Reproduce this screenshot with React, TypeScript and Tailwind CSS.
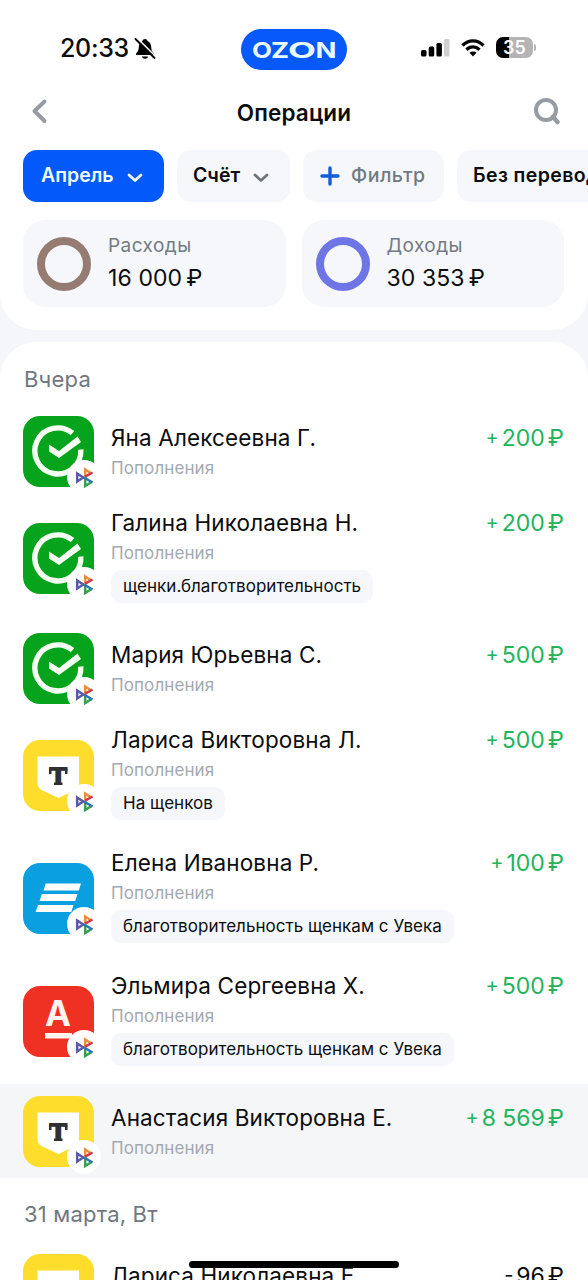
import { ReactNode } from 'react';

type Bank = 'sber' | 'tbank' | 'vtb' | 'alfa';

type Operation = {
  id: number;
  name: string;
  bank: Bank;
  sign: string;
  amount: string;
  note?: string;
  active?: boolean;
};

const yesterday: Operation[] = [
  { id: 1, name: 'Яна Алексеевна Г.', bank: 'sber', sign: '+', amount: '200' },
  {
    id: 2,
    name: 'Галина Николаевна Н.',
    bank: 'sber',
    sign: '+',
    amount: '200',
    note: 'щенки.благотворительность',
  },
  { id: 3, name: 'Мария Юрьевна С.', bank: 'sber', sign: '+', amount: '500' },
  {
    id: 4,
    name: 'Лариса Викторовна Л.',
    bank: 'tbank',
    sign: '+',
    amount: '500',
    note: 'На щенков',
  },
  {
    id: 5,
    name: 'Елена Ивановна Р.',
    bank: 'vtb',
    sign: '+',
    amount: '100',
    note: 'благотворительность щенкам с Увека',
  },
  {
    id: 6,
    name: 'Эльмира Сергеевна Х.',
    bank: 'alfa',
    sign: '+',
    amount: '500',
    note: 'благотворительность щенкам с Увека',
  },
  {
    id: 7,
    name: 'Анастасия Викторовна Е.',
    bank: 'tbank',
    sign: '+',
    amount: '8 569',
    active: true,
  },
];

const march: Operation[] = [
  { id: 8, name: 'Лариса Николаевна Е.', bank: 'tbank', sign: '-', amount: '96' },
];

const bankLogos: Record<Bank, ReactNode> = {
  sber: (
    <>
      <rect width="71" height="71" rx="17" fill="#06a31c" />
      <path
        d="M49.5 17.2A23 23 0 1 0 57.8 33.5"
        fill="none"
        stroke="#f4fff2"
        strokeWidth="5.4"
      />
      <path
        d="M26 28.5L36 35L54.5 20.5L58 26L36 42L26 35.5Z"
        fill="#f4fff2"
      />
    </>
  ),
  tbank: (
    <>
      <rect width="71" height="71" rx="17" fill="#ffdd2d" />
      <path
        d="M14.5 16.5H56V42C56 47 54 49 51 50.5L35.5 58L19.5 50.5C16.5 49 14.5 47 14.5 42Z"
        fill="#fff"
      />
      <text
        x="35.3"
        y="45"
        textAnchor="middle"
        textLength="20"
        lengthAdjust="spacingAndGlyphs"
        className="font-['Inter',sans-serif] text-[24px] font-black"
        fill="#2f3034"
      >
        T
      </text>
      <path d="M26 29H28.5V34H26ZM42 29H44.5V34H42ZM31 42.5H39.5V45H31Z" fill="#2f3034" />
    </>
  ),
  vtb: (
    <>
      <rect width="71" height="71" rx="17" fill="#0a9fdf" />
      <path
        d="M22.7 20.5H58L55.8 27.5H20.5ZM18.8 31H54.5L52.2 38H16.6ZM15 42H50.5L48.3 49H12.6Z"
        fill="#fff"
      />
    </>
  ),
  alfa: (
    <>
      <rect width="71" height="71" rx="17" fill="#ef3124" />
      <text
        x="35"
        y="40"
        textAnchor="middle"
        textLength="26"
        lengthAdjust="spacingAndGlyphs"
        className="font-['Inter',sans-serif] text-[35px] font-bold"
        fill="#fff4ee"
      >
        А
      </text>
      <rect x="22" y="47" width="27" height="5.5" fill="#fff4ee" />
    </>
  ),
};

const BankIcon = ({ bank }: { bank: Bank }) => (
  <svg width="78" height="78" viewBox="0 0 78 78" className="block shrink-0">
    {bankLogos[bank]}
    <circle cx="61" cy="61" r="17" fill="#fff" />
    <g fill="none" strokeWidth="2.5">
      <path d="M54.2 57.5V65.5L60.3 61.5Z" stroke="#5a5aa6" />
      <path d="M62.2 61.5V53.5L68 57.2" stroke="#e8903c" />
      <path d="M62.2 60.7L69.5 56.5" stroke="#d23a4c" />
      <path d="M62.2 62V70L68.2 66.2" stroke="#3a9d50" />
      <path d="M61 61.5L69.5 66.5" stroke="#2b74b8" />
    </g>
  </svg>
);

const ChevronDown = () => (
  <svg width="16" height="10" viewBox="0 0 16 10" fill="none" className="mt-[3px]">
    <path
      d="M2 2L8 7.5L14 2"
      stroke="currentColor"
      strokeWidth="2.8"
      strokeLinecap="round"
      strokeLinejoin="round"
    />
  </svg>
);

const StatusBar = () => (
  <div className="flex h-[76px] items-end justify-between pr-[51px] pb-[6px] pl-[60px]">
    <div className="flex h-[42px] w-[181px] items-center">
      <span className="w-[70px] text-[25px] font-medium tracking-[-0.3px] whitespace-nowrap">
        20:33
      </span>
      <svg width="22" height="22" viewBox="0 0 22 22" className="ml-[4px]">
        <path
          d="M11 1C12.5 1 13.3 1.8 13.5 3C16 4 17 6 17.2 9C17.4 13 18.5 14 20 15.5V17H2V15.5C3.5 14 4.6 13 4.8 9C5 6 6 4 8.5 3C8.7 1.8 9.5 1 11 1Z"
          fill="#000"
        />
        <path d="M8 18.5H14C13.5 21.5 8.5 21.5 8 18.5Z" fill="#000" />
        <path d="M3 0L22 19" stroke="#fff" strokeWidth="1.6" />
        <path d="M1.5 1L20.5 20" stroke="#000" strokeWidth="1.8" strokeLinecap="round" />
      </svg>
    </div>
    <div className="flex h-[41px] w-[106px] items-center justify-center rounded-full bg-[#0759fb]">
      <svg
        width="90"
        height="36"
        viewBox="0 0 90 36"
        fill="#e9fbff"
        className="font-['Inter',sans-serif] text-[22px] font-bold"
      >
        <text x="3" y="26" textLength="20" lengthAdjust="spacingAndGlyphs">O</text>
        <text x="22" y="26" textLength="18" lengthAdjust="spacingAndGlyphs">Z</text>
        <text x="39" y="26" textLength="28" lengthAdjust="spacingAndGlyphs">O</text>
        <text x="66.5" y="26" textLength="21" lengthAdjust="spacingAndGlyphs">N</text>
      </svg>
    </div>
    <div className="flex h-[42px] w-[190px] items-center justify-end gap-[11px] pr-px pb-[3px]">
      <svg width="29" height="19" viewBox="0 0 29 19">
        <rect x="0" y="12" width="5.5" height="6.5" rx="1.5" fill="#000" />
        <rect x="7.7" y="8.5" width="5.5" height="10" rx="1.5" fill="#000" />
        <rect x="15.4" y="5" width="5.5" height="13.5" rx="1.5" fill="#000" />
        <rect x="23" y="1" width="5.5" height="17.5" rx="1.5" fill="#cfcfcf" />
      </svg>
      <svg width="24" height="19" viewBox="0 0 24 19" fill="none" stroke="#000" strokeWidth="3.3">
        <path d="M1.5 7.5C7.5 1.3 16.5 1.3 22.5 7.5" />
        <path d="M5.5 11.7C9.3 8 14.7 8 18.5 11.7" />
        <path d="M12 18.5L8.5 14.8C10.5 13 13.5 13 15.5 14.8Z" fill="#000" stroke="none" />
      </svg>
      <div className="flex items-center">
        <div className="flex h-[21px] w-[37px] items-center justify-center rounded-[7px] bg-linear-to-r from-black from-35% to-[#b4b4b4] to-35% text-[18px] leading-[21px] font-semibold text-white">
          35
        </div>
        <div className="ml-px h-[7px] w-[2px] rounded-r-full bg-[#b4b4b4]" />
      </div>
    </div>
  </div>
);

const TitleBar = () => (
  <div className="flex h-[74px] items-center justify-between pr-[27px] pl-[29px]">
    <svg width="26" height="26" viewBox="0 0 26 26" fill="none" className="mb-1">
      <path
        d="M15.5 3.5L5.5 13L15.5 23"
        stroke="#969ca1"
        strokeWidth="4"
        strokeLinecap="round"
        strokeLinejoin="round"
      />
    </svg>
    <h1 className="text-[22.5px] font-semibold tracking-[0.15px]">Операции</h1>
    <svg width="28" height="28" viewBox="0 0 28 28" fill="none" className="mb-1">
      <circle cx="13" cy="13" r="10" stroke="#969ca1" strokeWidth="4" />
      <path d="M20 20L24.5 25" stroke="#969ca1" strokeWidth="4.5" strokeLinecap="round" />
    </svg>
  </div>
);

const Filters = () => (
  <div className="flex gap-[13px] overflow-hidden pl-[23px] text-[19.5px] font-semibold whitespace-nowrap">
    <div className="flex h-[52px] w-[141px] shrink-0 items-center justify-between rounded-[14px] bg-[#0459fb] pr-[21px] pl-[18px] text-[#effaff]">
      Апрель
      <ChevronDown />
    </div>
    <div className="flex h-[52px] w-[113px] shrink-0 items-center justify-between rounded-[14px] bg-[#f5f7fa] pr-[21px] pl-4">
      Счёт
      <span className="text-[#6e7479]">
        <ChevronDown />
      </span>
    </div>
    <div className="flex h-[52px] w-[141px] shrink-0 items-center gap-[11px] rounded-[14px] bg-[#f5f7fa] pl-[17px] font-medium tracking-[0.5px] text-[#6f7b84]">
      <svg width="20" height="20" viewBox="0 0 20 20">
        <path d="M10 2V18M2 10H18" stroke="#0f5fdc" strokeWidth="3.4" strokeLinecap="round" />
      </svg>
      Фильтр
    </div>
    <div className="flex h-[52px] w-[190px] shrink-0 items-center rounded-[14px] bg-[#f5f7fa] pl-4 tracking-[0.4px]">
      Без переводов
    </div>
  </div>
);

const Summary = ({
  title,
  amount,
  children,
}: {
  title: string;
  amount: string;
  children: ReactNode;
}) => (
  <div className="flex h-[87px] flex-1 items-center gap-[17px] rounded-[22px] bg-[#f5f7fa] pl-[14px]">
    {children}
    <div className="flex flex-col pb-[4px]">
      <span className="text-[19px] leading-[33px] tracking-[0.45px] text-[#727b83]">{title}</span>
      <span className="text-[23px] leading-[33px] tracking-[0.1px]">
        {amount}
        <span className="ml-[4px]">₽</span>
      </span>
    </div>
  </div>
);

const OperationRow = ({ item }: { item: Operation }) => (
  <li
    className={`flex px-6 ${item.note ? 'h-[123px]' : 'h-[94px]'} ${item.active ? 'bg-[#f4f6f8]' : ''}`}
  >
    <div className={`-ml-px ${item.note ? 'pt-[25px]' : 'pt-3'}`}>
      <BankIcon bank={item.bank} />
    </div>
    <div
      className={`ml-[10px] flex flex-1 flex-col items-start whitespace-nowrap ${item.note ? 'pt-[10px]' : 'pt-[19px]'}`}
    >
      <span className="text-[22.5px] leading-[30px] tracking-[0.13px]">{item.name}</span>
      <span className="text-[17px] leading-[30px] tracking-[0.1px] text-[#a3a9b0]">
        Пополнения
      </span>
      {item.note && (
        <span className="mt-0.5 rounded-[10px] bg-[#f5f7fa] px-3 text-[17px] leading-[33px] tracking-[0.03px]">
          {item.note}
        </span>
      )}
    </div>
    <div
      className={`flex text-[23px] leading-[30px] whitespace-pre ${item.note ? 'pt-[10px]' : 'pt-[19px]'} ${item.sign === '+' ? 'text-[#22b45b]' : ''}`}
    >
      <span className="mr-[3px] text-[20px] leading-[28px]">{item.sign}</span>
      {item.amount}
      <span className="ml-[3px]">₽</span>
    </div>
  </li>
);

const DayTitle = ({ children }: { children: ReactNode }) => (
  <h2 className="pl-6 text-[22px] leading-[30px] tracking-[0.2px] text-[#70777e]">{children}</h2>
);

const App = () => (
  <div className="relative h-[1280px] w-[588px] overflow-hidden bg-[#f5f6fa] font-['Inter','Noto_Sans',sans-serif] text-[#0c0d0f]">
    <header className="h-[330px] rounded-b-[36px] bg-white">
      <StatusBar />
      <TitleBar />
      <Filters />
      <div className="mt-[18px] flex gap-4 pr-6 pl-[23px]">
        <Summary title="Расходы" amount="16 000">
          <div className="size-[54px] shrink-0 rounded-full border-8 border-[#967b73]" />
        </Summary>
        <Summary title="Доходы" amount="30 353">
          <div className="size-[54px] shrink-0 rounded-full border-8 border-[#6e75e5]" />
        </Summary>
      </div>
    </header>

    <main className="mt-3 rounded-t-[36px] bg-white">
      <div className="h-[62px] pt-[22px]">
        <DayTitle>Вчера</DayTitle>
      </div>
      <ul>
        {yesterday.map((item) => (
          <OperationRow key={item.id} item={item} />
        ))}
      </ul>
      <div className="h-16 pt-[21px]">
        <DayTitle>31 марта, Вт</DayTitle>
      </div>
      <ul>
        {march.map((item) => (
          <OperationRow key={item.id} item={item} />
        ))}
      </ul>
    </main>

    <div className="absolute bottom-[12px] left-[189px] h-[7px] w-[210px] rounded-full bg-black" />
  </div>
);

export default App;
